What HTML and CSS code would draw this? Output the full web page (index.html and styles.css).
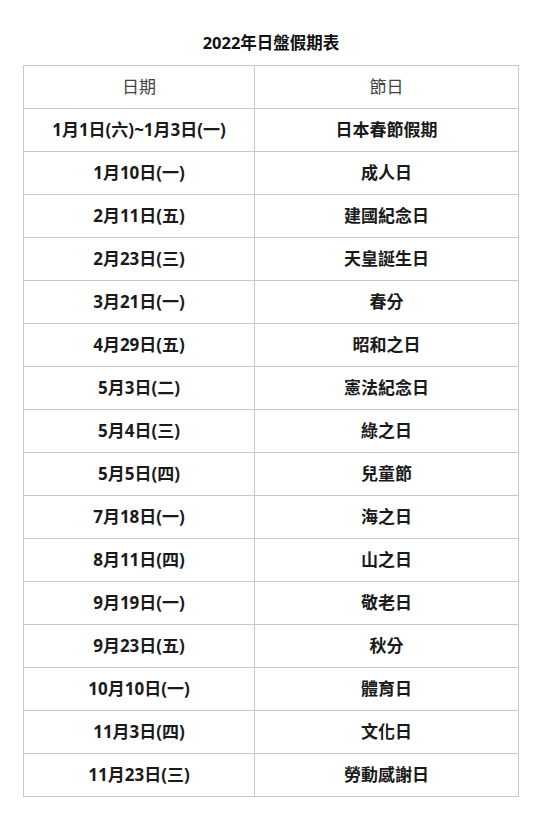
FILE: index.html
```html
<!DOCTYPE html>
<html lang="zh-Hant">
<head>
<meta charset="utf-8">
<title>2022年日盤假期表</title>
<link rel="stylesheet" href="styles.css">
</head>
<body>
<div class="wrap">
  <h2 class="title">2022年日盤假期表</h2>
  <table class="holidays">
    <colgroup><col class="c1"><col class="c2"></colgroup>
    <thead>
      <tr><th>日期</th><th>節日</th></tr>
    </thead>
    <tbody>
      <tr><td>1月1日(六)~1月3日(一)</td><td>日本春節假期</td></tr>
      <tr><td>1月10日(一)</td><td>成人日</td></tr>
      <tr><td>2月11日(五)</td><td>建國紀念日</td></tr>
      <tr><td>2月23日(三)</td><td>天皇誕生日</td></tr>
      <tr><td>3月21日(一)</td><td>春分</td></tr>
      <tr><td>4月29日(五)</td><td>昭和之日</td></tr>
      <tr><td>5月3日(二)</td><td>憲法紀念日</td></tr>
      <tr><td>5月4日(三)</td><td>綠之日</td></tr>
      <tr><td>5月5日(四)</td><td>兒童節</td></tr>
      <tr><td>7月18日(一)</td><td>海之日</td></tr>
      <tr><td>8月11日(四)</td><td>山之日</td></tr>
      <tr><td>9月19日(一)</td><td>敬老日</td></tr>
      <tr><td>9月23日(五)</td><td>秋分</td></tr>
      <tr><td>10月10日(一)</td><td>體育日</td></tr>
      <tr><td>11月3日(四)</td><td>文化日</td></tr>
      <tr><td>11月23日(三)</td><td>勞動感謝日</td></tr>
    </tbody>
  </table>
</div>
</body>
</html>
```
FILE: styles.css
```css
html, body {
  margin: 0;
  padding: 0;
  background: #fff;
}
body {
  font-family: "Open Sans", "Noto Sans CJK TC", sans-serif;
  color: #222;
}
.wrap {
  padding: 32px 30px 0 23px;
}
.title {
  width: 496px;
  margin: 0 0 11px 0;
  font-size: 16.5px;
  font-weight: bold;
  text-align: center;
  line-height: 22px;
  color: #111;
}
.holidays {
  width: 496px;
  border-collapse: collapse;
  table-layout: fixed;
}
.holidays .c1 { width: 231px; }
.holidays th,
.holidays td {
  border: 1px solid #c8c8c8;
  height: 42px;
  padding: 0;
  text-align: center;
  vertical-align: middle;
  font-size: 17px;
  line-height: 20px;
}
.holidays th {
  font-weight: normal;
  color: #444;
}
.holidays td {
  font-weight: bold;
  color: #1a1a1a;
}
```
